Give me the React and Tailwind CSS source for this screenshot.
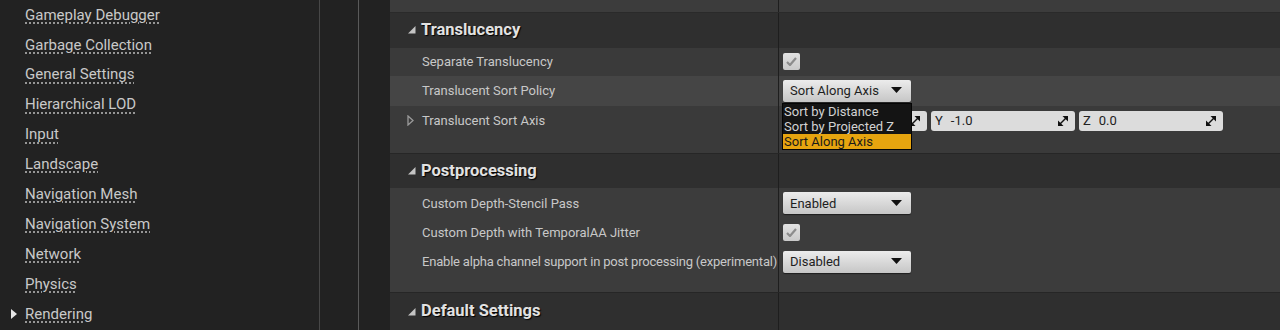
import React from 'react';

const sideItems = [
  'Gameplay Debugger',
  'Garbage Collection',
  'General Settings',
  'Hierarchical LOD',
  'Input',
  'Landscape',
  'Navigation Mesh',
  'Navigation System',
  'Network',
  'Physics',
  'Rendering',
];

const Expanded = () => (
  <svg width="8" height="8" viewBox="0 0 8 8" className="shrink-0">
    <polygon points="0,7.5 7.5,7.5 7.5,0" fill="#c4c4c4" />
  </svg>
);

const Collapsed = () => (
  <svg width="7" height="11" viewBox="0 0 7 11" className="shrink-0">
    <polygon points="1,1 6,5.5 1,10" fill="none" stroke="#9a9a9a" strokeWidth="1.3" />
  </svg>
);

const Caret = () => (
  <svg width="11" height="7" viewBox="0 0 11 7" className="shrink-0">
    <polygon points="0,0 11,0 5.5,6" fill="#111" />
  </svg>
);

const SpinIcon = () => (
  <svg width="10" height="10" viewBox="0 0 10 10" className="shrink-0">
    <polygon points="4.5,0 10,0 10,5.5" fill="#111" />
    <polygon points="0,4.5 0,10 5.5,10" fill="#111" />
    <line x1="2" y1="8" x2="8" y2="2" stroke="#111" strokeWidth="1.4" />
  </svg>
);

const Check = () => (
  <div className="w-[17px] h-[17px] rounded-[2px] bg-gradient-to-b from-[#e2e2e2] to-[#c9c9c9] flex items-center justify-center">
    <svg width="11" height="9" viewBox="0 0 11 9">
      <polyline points="1,5 4,8 10,1" fill="none" stroke="#8c8c8c" strokeWidth="2.2" />
    </svg>
  </div>
);

const Combo = ({ value }) => (
  <div className="w-[128px] h-[22px] rounded-[2px] bg-gradient-to-b from-[#ececec] to-[#c6c6c6] flex items-center justify-between pl-[7px] pr-[9px] text-[13px] text-[#1e1e1e] shadow-[0_1px_1px_rgba(0,0,0,0.5)]">
    <span>{value}</span>
    <Caret />
  </div>
);

// X field is hidden under the open combo list, so its text is left out
const VecField = ({ axis, value }) => (
  <div className="w-[144px] h-[20px] rounded-[3px] bg-[#dcdcdc] flex items-center justify-between pl-[4px] pr-[7px] text-[13px] text-[#222]">
    <span className="flex gap-[8px]">
      {axis && <span>{axis}</span>}
      {value && <span>{value}</span>}
    </span>
    <SpinIcon />
  </div>
);

const Row = ({ h, bg, name, children }) => (
  <div className={`flex ${h} ${bg}`}>
    <div className="w-[388px] flex items-center text-[13px] text-[#c8c8c8] whitespace-nowrap">
      {name}
    </div>
    <div className="flex-1 border-l border-[#1e1e1e] flex items-center pl-[4px] gap-[4px]">{children}</div>
  </div>
);

const Header = ({ title, h = 'h-[36px]' }) => (
  <div className={`flex ${h} bg-[#2f2f2f]`}>
    <div className="w-[388px] flex items-center gap-[5px] pl-[18px]">
      <Expanded />
      <span className="text-[16.5px] font-bold text-[#e2e2e2] [text-shadow:1px_1px_1px_#000]">{title}</span>
    </div>
    <div className="flex-1 border-l border-[#1e1e1e]" />
  </div>
);

const Label = ({ children, collapsed, tight }) => (
  <div className="flex items-center pl-[17px] gap-[8px]">
    <span className="w-[7px] flex">{collapsed ? <Collapsed /> : null}</span>
    <span className={tight ? 'tracking-[-0.2px]' : ''}>{children}</span>
  </div>
);

export default function App() {
  return (
    <div className="w-[1280px] h-[330px] overflow-hidden flex bg-[#222222] font-['Roboto',sans-serif]">
      <aside className="w-[319px] flex flex-col">
        {sideItems.map((item) => (
          <div key={item} className="h-[29.9px] flex items-center shrink-0">
            <span className="w-[25px] flex justify-start pl-[11px]">
              {item === 'Rendering' && (
                <svg width="6" height="10" viewBox="0 0 6 10">
                  <polygon points="0,0 6,5 0,10" fill="#e6e6e6" />
                </svg>
              )}
            </span>
            <span className="text-[15px] text-[#c9c9c9] underline decoration-dotted decoration-[#bdbdbd] underline-offset-[3px]">
              {item}
            </span>
          </div>
        ))}
      </aside>
      <div className="w-px bg-[#474747]" />
      <div className="w-[38px]" />
      <div className="w-px bg-[#5a5a5a]" />
      <div className="w-[31px]" />

      <main className="flex-1 flex flex-col">
        <Row h="h-[12px]" bg="bg-[#3c3c3c]" />
        <div className="h-px bg-[#2a2a2a]" />
        <Header title="Translucency" h="h-[35px]" />
        <Row h="h-[28px]" bg="bg-[#3a3a3a]" name={<Label>Separate Translucency</Label>}>
          <Check />
        </Row>
        <Row h="h-[30px]" bg="bg-[#454545]" name={<Label>Translucent Sort Policy</Label>}>
          <div className="relative">
            <Combo value="Sort Along Axis" />
            <div className="absolute left-[-1px] top-[23px] w-[130px] bg-[#141414] border border-[#050505] text-[13px] leading-[15px] text-[#d2d2d2] z-10">
              <div className="pl-[1px]">Sort by Distance</div>
              <div className="pl-[1px]">Sort by Projected Z</div>
              <div className="pl-[1px] bg-[#e6a40f] text-[#1a1a1a]">Sort Along Axis</div>
            </div>
          </div>
        </Row>
        <Row h="h-[30px]" bg="bg-[#3a3a3a]" name={<Label collapsed>Translucent Sort Axis</Label>}>
          <VecField />
          <VecField axis="Y" value="-1.0" />
          <VecField axis="Z" value="0.0" />
        </Row>
        <Row h="h-[17px]" bg="bg-[#3a3a3a]" />
        <div className="h-px bg-[#262626]" />
        <Header title="Postprocessing" h="h-[35px]" />
        <Row h="h-[30px]" bg="bg-[#3c3c3c]" name={<Label>Custom Depth-Stencil Pass</Label>}>
          <Combo value="Enabled" />
        </Row>
        <Row h="h-[29px]" bg="bg-[#3c3c3c]" name={<Label>Custom Depth with TemporalAA Jitter</Label>}>
          <Check />
        </Row>
        <Row h="h-[29px]" bg="bg-[#3c3c3c]" name={<Label tight>Enable alpha channel support in post processing (experimental)</Label>}>
          <Combo value="Disabled" />
        </Row>
        <Row h="h-[16px]" bg="bg-[#3c3c3c]" />
        <div className="h-px bg-[#262626]" />
        <Header title="Default Settings" h="h-[37px]" />
      </main>
    </div>
  );
}
